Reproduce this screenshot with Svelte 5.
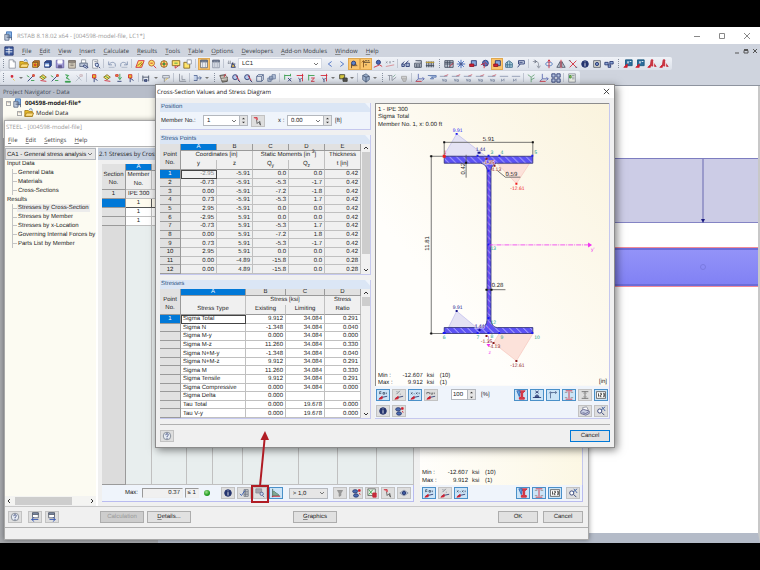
<script lang="ts">
	type Shape = [d: string, stroke: string, fill?: string];

	const navy = '#24346e';
	const red = '#d02030';
	const green = '#2f9a45';
	const grey = '#8b929e';
	const gold = '#e8bc28';
	const none = 'none';

	const diagramArrow: Shape = ['M2 9.5L11 7.5', navy];
	const redBase: Shape = ['M1 11L5 7.5V10.5Z', red, red];

	// every icon is drawn on a 12 x 12 grid
	const icons: Record<string, Shape[]> = {
		logo: [['M1 1H11V11H1Z', navy, '#3c5a9c'], ['M2 4H10M2 7H10M6 2V10', '#fff']],
		model: [['M3 1H9V8H3Z', '#3b6eb4', '#8bb6e6'], ['M1 4H6V11H1ZM3 6H8M3 8H8M9 7V11', '#52617d', '#c9d6e8']],
		new: [['M2.5 1H7.5L10 3.5V11H2.5Z', grey, '#fff'], ['M7.5 1V3.5H10', grey]],
		open: [['M1 10V3H5L6 4H10V10Z', '#a67c18', gold], ['M1 10L3 6H11.5L10 10Z', '#a67c18', '#ffe082'], ['M6 2C8 0 10 1 10 3', '#3970b0']],
		cubeGold: [['M4 2H10V8L8 10V4H2Z', '#7a4a22', '#c4822e'], ['M2 4H8V10H2Z', '#7a4a22', gold], ['M4 6H6V8H4Z', red, gold]],
		cubeBlue: [['M4 2H10V8L8 10V4H2Z', navy, '#3158a8'], ['M2 4H8V10H2Z', navy, '#759bd8'], ['M3 7H7V8H3Z', '#fff', '#fff']],
		save: [['M1.5 1.5H10.5V10.5H1.5Z', '#6a62a8', '#a59fd8'], ['M3.5 1.5H8.5V5H3.5Z', '#fff', '#fff'], ['M4 8H8V10.5H4Z', '#5d5588', '#5d5588']],
		book: [['M2 2H10V11H2Z', '#77706a', '#d9d2bf'], ['M2 2H10V4H2ZM4 6H8M4 8H8', '#77706a', '#9a9284']],
		print: [['M3 1H8V5H3Z', grey, '#fff'], ['M1 5H10V9H1Z', '#5d6a84', '#bac4d6'], ['M6 7L11 10L9 11L5 9Z', navy, '#dde7f6']],
		preview: [['M2 1H8V11H2Z', grey, '#fff'], ['M4 3H7M4 5H7', grey], ['M9 7A2 2 0 1 1 5 7A2 2 0 1 1 9 7M9 9L11 11', navy, '#cfe2f8']],
		undo: [['M2 3V7H6M2.5 7C4 3 10 3 10 7V9', '#7e8faf'], ['M2 10H9', '#a8b2c4']],
		redo: [['M10 3V7H6M9.5 7C8 3 2 3 2 7V9', '#7e8faf'], ['M3 10H10', '#a8b2c4']],
		select: [['M4 2H11L8 10H1Z', red, '#ffe46a'], ['M3 8L8 4M6 9L9 5', '#856000']],
		zoomGold: [['M9 5A3.5 3.5 0 1 1 2 5A3.5 3.5 0 1 1 9 5', '#b4582a', '#ffe46a'], ['M4 5H7M8 8L11 11', red]],
		target: [['M10 6A4 4 0 1 1 2 6A4 4 0 1 1 10 6', '#80631a', '#ffe46a'], ['M6 2V10M2 6H10', red], ['M5 5H7V7H5Z', green, green]],
		screen: [['M1.5 2H10.5V8H1.5Z', '#80631a', '#ffe46a'], ['M5 8V11L9 8', red], ['M4 5H8', green]],
		folder: [['M1 4H8V11H1Z', '#80631a', '#ffe46a'], ['M5 1H10V6H5Z', grey, '#fff']],
		tableOn: [['M2 1.5H10V10.5H2Z', '#5a6375', '#fff'], ['M2 1.5H10V3.5H2Z', '#5a6375', '#7b8aa6'], ['M4.5 3V10.5M7.5 3V10.5', '#8b94a6']],
		tableOff: [['M2 1.5H10V10.5H2Z', '#8b94a6', '#d8dde6'], ['M2 1.5H10V3.5H2Z', '#5a6375', '#7b8aa6'], ['M4.5 3V10.5M7.5 3V10.5', '#a8b0be']],
		loads: [['M2 2V6M4 2V6M1 4.5L2 6L3 4.5', grey], ['M5 6H10M7 4L5 10H10L8 6', navy, '#e2bc5a']],
		prev: [['M8 3L4 6L8 9', '#3a64c0']],
		next: [['M4 3L8 6L4 9', '#3a64c0']],
		support: [['M8 5A2.5 2.5 0 1 1 3 5A2.5 2.5 0 1 1 8 5', navy, '#5f86cc'], ['M3 6V11M3 8H9M7 6L10 8', '#5b4630']],
		values: [['M3 2V10M1 4L3 2L5 4', '#80501c'], ['M3 4H11M5 2H7M8 2H10M5 7H7', '#4f4030']],
		result: [['M9 4A2.5 2.5 0 1 1 4 4A2.5 2.5 0 1 1 9 4', navy, '#4665b5'], ['M1 10L8 7L11 9', red]],
		xxx: [['M1 3L3 5M3 3L1 5M5 3L7 5M7 3L5 5M9 3H11', grey], ['M1 9L11 7', '#d7848c']],
		glasses: [['M1 6L4 3M5 6L9 2', navy], ['M1 6H4V9H1ZM6 5H10V9H6Z', navy, '#a6b6d4']],
		building: [['M2 5H10V10H2ZM3 2H10V5', '#3c4659', '#c6ced9'], ['M4 6V10M6 6V10M8 6V10', '#3c4659']],
		fence: [['M1 4H11M1 8H11M2 3V10M4 3V10M6 3V10M8 3V10M10 3V10', '#394253'], ['M1 4H11', gold]],
		gridTable: [['M1 2H11V10H1Z', '#3c4659', '#c8d0dc'], ['M1 4H11M1 6H11M4 2V10M7 2V10', '#3c4659'], ['M7 9L11 5', red]],
		snow: [['M6 1V11M1 6H11M2.5 2.5L9.5 9.5M9.5 2.5L2.5 9.5', '#315fbe'], ['M5 5H7V7H5Z', navy, '#fff']],
		block: [['M4 2H10V8H4Z', navy, '#86a8dc'], ['M2 6H7V9H2Z', '#8b1525', red]],
		ball: [['M10 5A3.5 3.5 0 1 1 3 5A3.5 3.5 0 1 1 10 5', navy, '#567ec8'], ['M1 7L5 5V11M5 3L9 7', red]],
		mesh: [['M2 10V5L6 2L10 5V10Z', '#386685', '#b3d7e5'], ['M2 7H10M4 3V10M7 3V10', '#386685']],
		flag: [['M3 2H10V6H3Z', navy, '#cfd9ea'], ['M5 6L2 10M4 4H8', navy]],
		curve: [['M1 3H5C8 3 8 6 8 10M6 8L8 11L10 8', grey], ['M3 1L5 3L3 5', '#3c4659']],
		rotate: [['M2 6C2 3 10 3 10 6S2 9 2 6', '#4c74b8'], ['M6 1V11M4.5 3L6 1L7.5 3', red]],
		mirror: [['M1 10L5 3V10ZM11 10L7 3V10Z', '#4c5668', '#c4ccd8'], ['M6 1V11', red]],
		cross: [['M2 2L10 10M10 2L2 10', red], ['M1 2H3M9 10H11', '#4c5668']],
		info: [['M10 6A4 4 0 1 1 2 6A4 4 0 1 1 10 6', navy, navy], ['M6 3V4M6 5V9', '#fff']],
		camera: [['M2 2H10V10H2Z', '#545c68', '#dcdcd4'], ['M8 6A2 2 0 1 1 4 6A2 2 0 1 1 8 6', navy, '#6d89be']],
		gears: [['M5 4H1V7H5ZM11 3H7V6H11ZM8 7H5V10H8Z', navy, '#8ba6d6']],
		docBlue: [['M3 1H11V8H3Z', '#15557c', '#2c6c9c'], ['M5 3L7 5M7 3L5 5M8 3H10', '#fff'], ['M1 10L5 6V10Z', red, red]],
		pdf: [['M5 1H7L8 5L11 9L4 8Z', '#c03040', '#c93744'], ['M8 2V10', '#fff'], ['M1 10L4 7V10Z', red, red]],
		node: [['M5 3H7V5H5Z', red, red], ['M7 7L9 9', gold]],
		member: [['M2 10L9 3', navy], ['M1 3L4 5M6 9H10', green], ['M8 2H10V4H8Z', red, gold]],
		surface: [['M2 5L6 2L10 5L6 8Z', '#7d651a', '#ffe46a'], ['M3 9L10 10', red], ['M4 4L8 6', green]],
		tree: [['M4 2L8 3L5 6L9 8', green, '#7cc488'], ['M4 10H10V11H4Z', green, green]],
		faded: [['M2 10L9 3M3 3L9 9', '#b3bac6'], ['M7 2H10V4H7Z', '#ccb2b8']],
		pin: [['M5 6V11M5 6L9 9', navy], ['M3 2H7V6H3Z', red, gold]],
		force: [['M7 1V7M5 5L7 8L9 5', green], ['M2 2H5V4H2Z', red, gold], ['M4 10H9', navy]],
		dims: [['M1 3V10M1 5H8M8 3V10', '#404b60'], ['M3 8H6V10H3Z', navy, '#6c7890']],
		frame: [['M2 3H10V6H2ZM4 6V11', grey, '#dce1e8'], ['M5 9L8 6', gold]],
		axis: [['M3 1V10H11M6 3V8H10', grey]],
		rigid: [['M1 3H5V9H1M5 6H10M8 4L10 6L8 8', '#536894', '#c6d4ec']],
		wall: [['M1 3L7 2L10 5V10L4 11Z', '#4f4b44', '#a09d94'], ['M2 5L9 4M3 8L10 7', '#e8e4d8'], ['M8 1L6 5', red]],
		zoom: [['M8 5A3 3 0 1 1 2 5A3 3 0 1 1 8 5M8 8L11 11', navy, '#b8cef0'], ['M6 3L10 9', red]],
		cube: [['M2 4H8V10H2ZM4 2H10V8L8 10M8 4L10 2M2 4L4 2', '#50648c']],
		cubes: [['M1 6H5V10H1ZM6 2H10V7H6ZM3 4H7V8H3Z', '#6a7c9e', '#b8c6dc']],
		viewX: [['M2 2V8M2 3H9M9 1V4', green], ['M6 6L10 10M10 6L6 10', navy]],
		viewY: [['M2 3H10M9 1V10', red], ['M4 6L6 8L8 6M6 8V11', navy]],
		viewZ: [['M2 2V9M2 3H9', green], ['M5 6H9L5 10H9', red]],
		film: [['M2 2H8V7H2Z', '#3c3c34', '#d4c640'], ['M6 6H11V10H6Z', '#3c3c34', '#555']],
		solid: [['M2 3L6 1L10 4V8L6 11L2 8Z', '#5a6c88', '#9cb0cc'], ['M2 3L6 5L10 4M6 5V11', '#42516c']],
		mView: [['M1 3H6M3 3V9M6 3V9M6 9L11 5', grey], ['M7 5L10 2', '#83b09a']],
		stamp: [['M3 4H9V7H3ZM4 7L5 10H8L9 7', '#a8a8a8', '#d0d0d0']],
		local: [['M4 1V7L1 10M4 7H11M9 5L11 7L9 9', '#5868b0'], ['M1 10H8', red]],
		moment: [['M1 3H11V5H6L8 7H4L6 5', '#5c77ac', '#a6bbe2']],
		forceV: [['M6 4L11 2', '#cb5c69'], ['M1 4H10', '#8c97b0'], ['M4 7L5 10L6 7M7 8H9V10H7Z', '#8c97b0']],
		forceN: [['M1 4H11M3 7V10L6 7V10', '#8c97b0']],
		plant: [['M5 11V5L1 2M5 5L9 2M5 8L9 6', '#65a174']],
		windows: [['M1 1H5V5H1ZM7 1H11V5H7ZM1 7H5V11H1ZM7 7H11V11H7Z', navy, '#b8c6e2']],
		panel: [['M2 1H10V11H2Z', grey, '#eef0e8'], ['M6 3H9M6 5H9M6 7H9', grey], ['M3 3H5V6H3Z', green, '#c9a44a']],
		help: [['M10.5 6A4.5 4.5 0 1 1 1.5 6A4.5 4.5 0 1 1 10.5 6', '#77808c', '#e8edf4'], ['M4.5 5C4.5 2.5 8 3 7.5 5C7 6 6 6 6 7.5M6 8.5V9.5', navy]],
		pick: [['M4 2L5 9L7 7L9 11', '#444', '#fff'], ['M1 2H5V5', red, '#e88a90'], ['M8 6L9 11', '#555']],
		diaBlue: [['M2 2H4M2 2V5M2 4H4M6 3H8V5H6ZM10 3V5', '#44546e'], diagramArrow, redBase],
		diaPct: [['M3 5L7 1M3 2H4M7 5H8', '#6f7682'], diagramArrow, redBase],
		diaXx: [['M1 3L3 5M3 3L1 5M5 4V5M7 3L9 5M9 3L7 5M11 3V5', '#44546e'], diagramArrow, redBase],
		diaMax: [['M1 5V3H4V5M6 3V5H8V3M10 3V5', '#666'], diagramArrow, redBase],
		stressI: [['M3 1H11L9 3H8V9H10V11H4V9H6V3H3Z', red, '#d84450'], ['M1 1H5L4 8Z', '#2c68b8', '#6ba3dc']],
		pointNo: [['M4 1L8 4M8 1L4 4', navy], ['M1 9H11M6 5V9M4 7H8V9H4Z', navy, '#7391c4']],
		local2: [['M3 10V3H10M1.5 4L3 2L4.5 4M8.5 1.5L10.5 3L8.5 4.5', '#506890']],
		dimI: [['M2 1H10M2 11H10M6 2V10', red], ['M1 3H4M8 3H11M1 9H4M8 9H11', '#999']],
		dimGrey: [['M2 2H10M2 10H10M6 2V10', '#686868'], ['M4 4H8M4 8H8', '#a0a0a0']],
		digits: [['M0.5 2H11.5V10H0.5Z', '#555', '#fff'], ['M3 4V8M5 4H6.5V6H5V8H6.5M8.5 4H10V8H8.5M8.5 6H10', '#333']],
		eyes: [['M8 4A3 2 0 1 1 2 4A3 2 0 1 1 8 4M9 9A3 2 0 1 1 3 9A3 2 0 1 1 9 9', navy, '#4a6cb0'], ['M9 2H11V4H9ZM10 6L11 8', red, red]],
		printer: [['M3 2L8 1L10 5L4 6Z', grey, '#fff'], ['M1 6L4 4L11 6V9L7 11L1 9Z', '#5d5f88', '#c9cfe4'], ['M3 8L7 9L10 7', '#5d5f88']],
		zoomAll: [['M7 6A2.5 2.5 0 1 1 2 6A2.5 2.5 0 1 1 7 6M7 8L10 11', navy, '#fff'], ['M6 5L11 1M7 1L11 6', '#32589d']],
		sheetBack: [['M3 1H10V7H3Z', '#555d6c', '#fff'], ['M3 1H10V3H3Z', '#555d6c', '#8494b0'], ['M10 9H2M5 6L2 9L5 11.5', '#2c4fae']],
		sheetNext: [['M2 1H9V7H2Z', '#555d6c', '#fff'], ['M2 1H9V3H2Z', '#555d6c', '#8494b0'], ['M3 9H10M7 6L10 9L7 11.5', '#2c4fae']],
		tableCheck: [['M6 2H11V10H6ZM6 4H11M6 6H11M6 8H11M8 2V10', '#6f7682', '#e7e7e7'], ['M1 7L3 9L7 3', '#2c56ae']],
		section: [['M1 1H8V6H1Z', '#8f8f98', '#a5a5ae'], ['M10 7A2 2 0 1 1 6 7A2 2 0 1 1 10 7M9 9L11 11', '#4f6290', '#cbd7ee']],
		bars: [['M2 1V11', '#3f5e52'], ['M2 4H4L6 6L8 7L10 9H2Z', '#5f8672', '#7fa795'], ['M1 10H11', red]],
		filter: [['M3 3H9L7 6V9L5 10V6Z', '#8b8b8b', '#9a9a9a']],
		excel: [['M1 1H10V9H1Z', '#666', '#e8f2e6'], ['M2 2L7 8M7 2L2 8', green], ['M7 6H11V11H7Z', red, '#c03040']],
		eye: [['M1 6L6 2.5L11 6L6 9.5Z', '#8a94a8', '#b9c4d8'], ['M8 6A2 2 0 1 1 4 6A2 2 0 1 1 8 6', navy, '#3c5aa0']]
	};

	const barOne =
		'grip new open cubeGold cubeBlue save book print preview | undo redo | select zoomGold target screen folder | *tableOn tableOff | loads lc prev next *support *values result xxx | glasses building fence grip gridTable snow block ball *block mesh flag | curve rotate mirror cross info camera gears grip docBlue docBlue pdf pdf'.split(' ');
	const barTwo =
		'grip node dd member surface member tree faded | pin surface force pin | dims dd frame | axis | rigid dd grip wall zoom zoom cube cubes | viewX viewY viewZ viewY dd film dd | solid dd grip mView stamp | local moment forceV forceV forceV forceV forceV forceN forceN | plant local windows | panel'.split(' ');

	const menu = ['File', 'Edit', 'View', 'Insert', 'Calculate', 'Results', 'Tools', 'Table', 'Options', 'Developers', 'Add-on Modules', 'Window', 'Help'];
	const steelMenu = ['File', 'Edit', 'Settings', 'Help'];

	const inputData = ['General Data', 'Materials', 'Cross-Sections'];
	const results = ['Stresses by Cross-Section', 'Stresses by Member', 'Stresses by x-Location', 'Governing Internal Forces by', 'Parts List by Member'];

	const stressPoints = [
		['-2.95', '-5.91', '0.0', '0.0', '0.42'],
		['-0.73', '-5.91', '-5.3', '-1.7', '0.42'],
		['0.00', '-5.91', '-7.2', '-1.8', '0.42'],
		['0.73', '-5.91', '-5.3', '1.7', '0.42'],
		['2.95', '-5.91', '0.0', '0.0', '0.42'],
		['-2.95', '5.91', '0.0', '0.0', '0.42'],
		['-0.73', '5.91', '-5.3', '1.7', '0.42'],
		['0.00', '5.91', '-7.2', '1.8', '0.42'],
		['0.73', '5.91', '-5.3', '-1.7', '0.42'],
		['2.95', '5.91', '0.0', '0.0', '0.42'],
		['0.00', '-4.89', '-15.8', '0.0', '0.28'],
		['0.00', '4.89', '-15.8', '0.0', '0.28']
	];

	const stresses = [
		['Sigma Total', '9.912', '34.084', '0.291'],
		['Sigma N', '-1.348', '34.084', '0.040'],
		['Sigma M-y', '0.000', '34.084', '0.000'],
		['Sigma M-z', '11.260', '34.084', '0.330'],
		['Sigma N+M-y', '-1.348', '34.084', '0.040'],
		['Sigma N+M-z', '9.912', '34.084', '0.291'],
		['Sigma M', '11.260', '34.084', '0.330'],
		['Sigma Tensile', '9.912', '34.084', '0.291'],
		['Sigma Compressive', '0.000', '34.084', '0.000'],
		['Sigma Delta', '0.000', '', ''],
		['Tau Total', '0.000', '19.678', '0.000'],
		['Tau V-y', '0.000', '19.678', '0.000']
	];

	const emptyColumns = [1, 2, 3, 4, 5, 6, 7];

	let memberNo = $state('1');
	let xLocation = $state('0.00');
	let percent = $state('100');
	let selectedPoint = $state(0);
	let selectedStress = $state(0);
</script>

{#snippet icon(name: string)}
	<svg class="icon" viewBox="0 0 12 12" aria-hidden="true">
		{#each icons[name] as [d, stroke, fill]}
			<path {d} {stroke} fill={fill ?? none} />
		{/each}
	</svg>
{/snippet}

{#snippet tool(name: string, on = false)}
	<button type="button" class="tool" class:on aria-label={name}>{@render icon(name)}</button>
{/snippet}

{#snippet chevron()}
	<svg class="chevron" viewBox="0 0 6 6" aria-hidden="true"><path d="M1 2L3 4L5 2" /></svg>
{/snippet}

{#snippet spinner()}
	<span class="spinner">
		<button type="button" aria-label="Increase"><svg viewBox="0 0 6 4"><path d="M1 3L3 1L5 3Z" /></svg></button>
		<button type="button" aria-label="Decrease"><svg viewBox="0 0 6 4"><path d="M1 1L3 3L5 1Z" /></svg></button>
	</span>
{/snippet}

{#snippet scrollbar()}
	<div class="scrollbar">
		<svg viewBox="0 0 8 8"><path d="M2 5L4 3L6 5" /></svg>
		<i></i>
		<svg viewBox="0 0 8 8"><path d="M2 3L4 5L6 3" /></svg>
	</div>
{/snippet}

{#snippet toolbar(items: string[])}
	<div class="toolbar">
		{#each items as item}
			{#if item === 'grip'}
				<span class="grip"></span>
			{:else if item === '|'}
				<span class="sep"></span>
			{:else if item === 'dd'}
				<button type="button" class="more" aria-label="More"></button>
			{:else if item === 'lc'}
				<label class="combo load-case">
					<select aria-label="Load case"><option>LC1</option></select>
					{@render chevron()}
				</label>
			{:else}
				<button type="button" class="bar-button" class:active={item[0] === '*'} aria-label={item.replace('*', '')}>
					{@render icon(item.replace('*', ''))}
				</button>
			{/if}
		{/each}
	</div>
{/snippet}

<main class="desktop">
	<section class="app">
		<header class="title-bar">
			{@render icon('model')}
			<span>RSTAB 8.18.02 x64 - [004598-model-file, LC1*]</span>
			<div class="window-buttons">
				<button type="button" aria-label="Minimize"><svg viewBox="0 0 8 8"><path d="M1 4.5H7" /></svg></button>
				<button type="button" aria-label="Maximize"><svg viewBox="0 0 8 8"><path d="M1.5 1.5H6.5V6.5H1.5Z" /></svg></button>
				<button type="button" aria-label="Close"><svg viewBox="0 0 8 8"><path d="M1 1L7 7M7 1L1 7" /></svg></button>
			</div>
		</header>
		<nav class="menu-bar">
			{@render icon('logo')}
			{#each menu as item}
				<button type="button"><u>{item[0]}</u>{item.slice(1)}</button>
			{/each}
			<div class="child-buttons">
				<button type="button" aria-label="Minimize document"><svg viewBox="0 0 6 6"><path d="M1 5H5" /></svg></button>
				<button type="button" aria-label="Restore document"><svg viewBox="0 0 6 6"><path d="M1 1.5H5M1 2.5H5V5H1Z" /></svg></button>
				<button type="button" aria-label="Close document"><svg viewBox="0 0 6 6"><path d="M1 1L5 5M5 1L1 5" /></svg></button>
			</div>
		</nav>
		{@render toolbar(barOne)}
		{@render toolbar(barTwo)}
		<div class="workspace">
			<aside class="navigator">
				<h2>Project Navigator - Data</h2>
				<ul>
					<li class="root"><span class="twist">−</span>{@render icon('model')}<b>004598-model-file*</b></li>
					<li class="branch"><span class="twist">−</span>{@render icon('open')}Model Data</li>
				</ul>
			</aside>
			<div class="canvas">
				<div class="load">
					<svg viewBox="0 0 6 64"><path d="M3 0V62" /><path class="head" d="M1 60H5L3 64Z" /></svg>
				</div>
				<div class="beam"><i></i></div>
			</div>
		</div>
	</section>

	<section class="steel">
		<header>STEEL - [004598-model-file]</header>
		<nav>
			{#each steelMenu as item}
				<button type="button"><u>{item[0]}</u>{item.slice(1)}</button>
			{/each}
		</nav>
		<div class="steel-body">
			<div class="cases">
				<label class="combo flat">
					<select aria-label="Case"><option>CA1 - General stress analysis</option></select>
					{@render chevron()}
				</label>
				<div class="case-tree">
					<ul>
						<li>Input Data</li>
						{#each inputData as item}
							<li class="leaf"><span>{item}</span></li>
						{/each}
						<li>Results</li>
						{#each results as item, i}
							<li class="leaf" class:current={i === 0}><span>{item}</span></li>
						{/each}
					</ul>
				</div>
				<div class="h-scroll">
					<svg viewBox="0 0 8 8"><path d="M5 2L3 4L5 6" /></svg>
					<i></i>
					<svg viewBox="0 0 8 8"><path d="M3 2L5 4L3 6" /></svg>
				</div>
			</div>
			<div class="results">
				<h2>2.1 Stresses by Cross-Section</h2>
				<div class="split">
					<div class="pane">
						<table class="sections">
							<colgroup>
								<col class="w24" /><col class="w26" /><col class="w35" /><col class="w26" /><col class="w30" />
								<col class="w56" /><col class="w39" /><col class="w39" /><col />
							</colgroup>
							<thead>
								<tr>
									<th rowspan="2">Section<br />No.</th>
									<th class="letter picked">A</th>
									{#each emptyColumns as _}<th class="letter"></th>{/each}
								</tr>
								<tr class="names">
									<th>Member<br />No.</th>
									{#each emptyColumns as _}<th></th>{/each}
								</tr>
							</thead>
							<tbody>
								<tr class="group"><th>1</th><td colspan="8">IPE 300</td></tr>
								<tr class="picked"><th></th><td>1</td>{#each emptyColumns as _}<td></td>{/each}</tr>
								<tr><th></th><td>1</td>{#each emptyColumns as _}<td></td>{/each}</tr>
								<tr><th></th><td>1</td>{#each emptyColumns as _}<td></td>{/each}</tr>
								<tr class="rest"><th></th><td></td>{#each emptyColumns as _}<td></td>{/each}</tr>
							</tbody>
						</table>
						<div class="strip">
							<label class="max">Max: <input value="0.37" readonly /></label>
							<input class="limit" value="≤ 1" aria-label="Limit" readonly />
							<span class="lamp"></span>
							{@render tool('info')}
							{@render tool('tableCheck')}
							{@render tool('section')}
							{@render tool('bars', true)}
							<label class="combo flat ratio">
								<select aria-label="Ratio filter"><option>&gt; 1,0</option></select>
								{@render chevron()}
							</label>
							{@render tool('filter')}
							{@render tool('eyes')}
							{@render tool('excel')}
							{@render tool('pick')}
							{@render tool('eye')}
						</div>
					</div>
					<div class="pane">
						<div class="preview">
							<dl class="extremes">
								<dt>Min :</dt><dd>-12.607</dd><dd>ksi</dd><dd>(10)</dd>
								<dt>Max :</dt><dd>9.912</dd><dd>ksi</dd><dd>(1)</dd>
							</dl>
						</div>
						<div class="strip">
							{@render tool('diaBlue', true)}
							{@render tool('diaPct')}
							{@render tool('diaXx', true)}
							<span class="push"></span>
							{@render tool('stressI', true)}
							{@render tool('dimI', true)}
							{@render tool('digits', true)}
							<span class="space"></span>
							{@render tool('zoomAll')}
						</div>
					</div>
				</div>
			</div>
		</div>
		<footer>
			{@render tool('help')}
			<span class="space"></span>
			{@render tool('sheetBack')}
			{@render tool('sheetNext')}
			<button type="button" class="push-button calc" disabled>Calculation</button>
			<button type="button" class="push-button"><u>D</u>etails...</button>
			<button type="button" class="push-button graphics"><u>G</u>raphics</button>
			<span class="push"></span>
			<button type="button" class="push-button">OK</button>
			<button type="button" class="push-button">Cancel</button>
		</footer>
		<div class="status"></div>
	</section>

	<section class="dialog" role="dialog" aria-labelledby="dialog-title">
		<header>
			<span id="dialog-title">Cross-Section Values and Stress Diagram</span>
			<button type="button" aria-label="Close"><svg viewBox="0 0 8 8"><path d="M1 1L7 7M7 1L1 7" /></svg></button>
		</header>
		<div class="dialog-body">
			<div class="left">
				<fieldset class="panel">
					<h3>Position</h3>
					<div class="position">
						<label class="member-label" for="member-no">Member No.:</label>
						<span class="combo">
							<select id="member-no" bind:value={memberNo}><option>1</option></select>
							{@render chevron()}
						</span>
						{@render spinner()}
						{@render tool('pick')}
						<label class="x-label" for="x-location">x :</label>
						<span class="combo">
							<select id="x-location" bind:value={xLocation}><option>0.00</option></select>
							{@render chevron()}
						</span>
						{@render spinner()}
						<span class="unit">[ft]</span>
					</div>
				</fieldset>

				<div class="panel">
					<h3>Stress Points</h3>
					<div class="table-box">
						<table class="points">
							<colgroup><col class="w21" /><col /><col /><col /><col /><col /></colgroup>
							<thead>
								<tr>
									<th rowspan="3">Point<br />No.</th>
									{#each 'ABCDE' as letter}
										<th class="letter" class:picked={letter === 'A'}>{letter}</th>
									{/each}
								</tr>
								<tr class="names">
									<th colspan="2">Coordinates [in]</th>
									<th colspan="2">Static Moments [in <sup>3</sup>]</th>
									<th>Thickness</th>
								</tr>
								<tr class="names last">
									<th>y</th><th>z</th><th>Q<sub>y</sub></th><th>Q<sub>z</sub></th><th>t [in]</th>
								</tr>
							</thead>
							<tbody>
								{#each stressPoints as row, i}
									<tr class:picked={i === selectedPoint} onclick={() => (selectedPoint = i)}>
										<th>{i + 1}</th>
										{#each row as cell}<td>{cell}</td>{/each}
									</tr>
								{/each}
							</tbody>
						</table>
						{@render scrollbar()}
					</div>
				</div>

				<div class="panel short">
					<h3>Stresses</h3>
					<div class="table-box">
						<table class="stresses">
							<colgroup><col class="w21" /><col class="w65" /><col class="w40" /><col class="w39" /><col /></colgroup>
							<thead>
								<tr>
									<th rowspan="3">Point<br />No.</th>
									{#each 'ABCD' as letter}
										<th class="letter" class:picked={letter === 'A'}>{letter}</th>
									{/each}
								</tr>
								<tr class="names">
									<th></th>
									<th colspan="2">Stress [ksi]</th>
									<th>Stress</th>
								</tr>
								<tr class="names last">
									<th>Stress Type</th><th>Existing</th><th>Limiting</th><th>Ratio</th>
								</tr>
							</thead>
							<tbody>
								{#each stresses as row, i}
									<tr class:picked={i === selectedStress} onclick={() => (selectedStress = i)}>
										<th>{i === 0 ? '1' : ''}</th>
										{#each row as cell}<td>{cell}</td>{/each}
									</tr>
								{/each}
							</tbody>
						</table>
						{@render scrollbar()}
					</div>
				</div>
			</div>

			<div class="right">
				<svg class="diagram" viewBox="0 0 234 283" preserveAspectRatio="xMidYMid meet">
					<defs>
						<linearGradient id="paper" x1="0" y1="1" x2="1" y2="0">
							<stop offset="0.3" stop-color="#fffefb" />
							<stop offset="1" stop-color="#faf3dd" />
						</linearGradient>
						<pattern id="hatch" width="7" height="7" patternUnits="userSpaceOnUse">
							<rect width="7" height="7" fill="#5c52f4" />
							<path d="M-1 -1L8 8M-1 6L1 8M6 -1L8 1" stroke="#b9b4ff" stroke-width="1" />
						</pattern>
					</defs>
					<rect width="234" height="283" fill="url(#paper)" />
					<text x="2" y="7">1 - IPE 300</text>
					<text x="2" y="14">Sigma Total</text>
					<text x="2" y="22">Member No. 1, x: 0.00 ft</text>

					<!-- stress areas -->
					<path class="tension" d="M68 52L81 30L111 53Z" />
					<path class="compression" d="M122 60H154L141 80Z" />
					<path class="tension" d="M73 224L81 208L104 227Z" />
					<path class="compression" d="M124 230H158L141 258L118 240Z" />

					<!-- profile -->
					<path
						class="profile"
						d="M68.5 52.5H157.5V59.5H121C118 60 115.5 63 115.5 67V216C115.5 221 118 224.5 122 224.5H157.5V230.5H68.5V224.5H105C109 224.5 111.5 221 111.5 216V67C111.5 63 109 60 105 59.5H68.5Z"
					/>

					<!-- dimensions -->
					<path class="dim" d="M68.5 52V38.5H157.5V52M55.5 52.5V230.5M54 52.5H68M54 230.5H68M90.5 51V74M110 186.5H130M122 67L130 73.5H145" />
					<path class="dot" d="M67.500 37.500h2v2h-2zM156.500 37.500h2v2h-2zM54.500 51.500h2v2h-2zM54.500 229.500h2v2h-2zM89.500 58h2v2h-2zM110 185.500h2v2h-2zM115 185.500h2v2h-2z" />
					<text class="mid" x="113" y="37">5.91</text>
					<text class="mid" x="136" y="72">0.59</text>
					<text class="mid" x="122" y="184">0.28</text>
					<text class="mid" transform="translate(53 140) rotate(-90)">11.81</text>
					<text class="mid" transform="translate(89 65) rotate(-90)">0.42</text>

					<!-- axes -->
					<path class="axis" d="M113 141.500H214" />
					<path class="magenta" d="M213 139L217 141.500L213 144ZM111 241H115L113 244Z" />
					<path class="web-axis" d="M113 53V240" />
					<text class="small axis-name" x="216" y="148">y'</text>
					<text class="small axis-name" x="113" y="251">z</text>

					<!-- stress points -->
					<path class="blue" d="M101 51h2v2h-2zM112 51h2v2h-2zM123 51h2v2h-2zM156 51h2v2h-2zM80 29h2v2h-2zM112 66h2v2h-2zM112 140h2v2h-2zM112 214h2v2h-2zM67 229h3v2h-3zM101 229h2v2h-2zM112 229h2v2h-2zM123 229h2v2h-2zM156 229h2v2h-2z" />
					<path class="navy" d="M102 48h3v2h-3zM80 207h2v2h-2zM103 226h2v2h-2z" />
					<path class="maroon" d="M110 54h2v2h-2zM118 61h2v2h-2zM110 232h2v2h-2zM117 239h2v2h-2zM140 257h2v2h-2z" />
					<path class="bright" d="M67 51h3v3h-3zM140 79h2v2h-2z" />
					<g class="small">
						<g class="point-no">
							<text x="115" y="50">3</text>
							<text x="125" y="50">4</text>
							<text x="159" y="50">5</text>
							<text x="115" y="147">13</text>
							<text x="115" y="221">12</text>
							<text x="67" y="236">6</text>
							<text x="101" y="236">7</text>
							<text x="115" y="235">8</text>
							<text x="125" y="236">9</text>
							<text x="159" y="236">10</text>
						</g>
						<text class="bright" x="68" y="50">1</text>
						<text class="mid blue" x="82" y="28">9.91</text>
						<text class="mid navy" x="105" y="47">1.44</text>
						<text class="mid maroon halo" x="113" y="60">-1.35</text>
						<text class="mid maroon" x="120" y="67">-4.13</text>
						<text class="mid bright" x="142" y="86">-12.61</text>
						<text class="mid navy" x="82" y="206">9.91</text>
						<text class="mid navy halo" x="104" y="225">1.44</text>
						<text class="mid maroon" x="111" y="240">-1.35</text>
						<text class="mid maroon" x="119" y="245">-4.13</text>
						<text class="mid maroon" x="142" y="264">-12.61</text>
					</g>

					<text x="2" y="274">Min :</text>
					<text class="end" x="47" y="274">-12.607</text>
					<text x="51" y="274">ksi</text>
					<text x="64" y="274">(10)</text>
					<text x="2" y="281">Max :</text>
					<text class="end" x="47" y="281">9.912</text>
					<text x="51" y="281">ksi</text>
					<text x="64" y="281">(1)</text>
					<text class="end" x="232" y="280">[in]</text>
				</svg>
				<div class="diagram-tools">
					<div class="tool-row">
						{@render tool('diaBlue', true)}
						{@render tool('diaPct')}
						{@render tool('diaXx', true)}
						{@render tool('diaMax')}
						<span class="percent"><input bind:value={percent} aria-label="Scale" />{@render spinner()}</span>
						<span class="unit">[%]</span>
						<span class="push"></span>
						{@render tool('stressI', true)}
						{@render tool('pointNo', true)}
						{@render tool('local2', true)}
						{@render tool('dimI', true)}
						{@render tool('dimGrey')}
						{@render tool('digits', true)}
					</div>
					<div class="tool-row">
						{@render tool('info')}
						{@render tool('eyes')}
						<span class="push"></span>
						{@render tool('printer')}
						{@render tool('zoomAll')}
					</div>
				</div>
			</div>
		</div>
		<footer>
			{@render tool('help')}
			<button type="button" class="push-button default">Cancel</button>
		</footer>
	</section>

	<svg class="callout" viewBox="0 0 22 74" aria-hidden="true">
		<rect x="2" y="56" width="16" height="16" />
		<path class="shaft" d="M10 56L14.500 10" />
		<path class="tip" d="M15 1L19 10H10.500Z" />
	</svg>
</main>

<style>
	:global(body) {
		background: #000;
		margin: 0;
	}

	.desktop {
		--ui: 'Open Sans', 'Noto Sans', sans-serif;
		box-sizing: border-box;
		color: #222;
		display: flex;
		flex-direction: column;
		font-family: 'Liberation Sans', Arial, sans-serif;
		font-size: 6px;
		line-height: 8px;
		min-height: 100vh;
		overflow: hidden;
		padding: 27px 0;
		position: relative;
		text-rendering: geometricPrecision;
	}

	.desktop *,
	.desktop *::before {
		box-sizing: border-box;
	}

	button,
	select,
	input {
		background: none;
		border: 0;
		border-radius: 0;
		color: inherit;
		font: inherit;
		margin: 0;
		min-width: 0;
		outline: 0;
		padding: 0;
		text-rendering: inherit;
	}

	h2,
	h3,
	ul,
	dl,
	dd,
	fieldset {
		border: 0;
		font: inherit;
		list-style: none;
		margin: 0;
		min-width: 0;
		padding: 0;
	}

	u {
		text-underline-offset: 1px;
		text-decoration-thickness: 1px;
		text-decoration-color: #888;
	}

	svg {
		display: block;
		fill: none;
	}

	.icon {
		flex: none;
		height: 10px;
		width: 10px;
	}

	.push {
		flex: 1;
	}

	/* main window */
	.app {
		background: #cfd4de;
		display: flex;
		flex: 1;
		flex-direction: column;
	}

	.title-bar {
		align-items: center;
		background: #fff;
		color: #999;
		display: flex;
		font-family: var(--ui);
		gap: 3px;
		height: 17px;
		padding-left: 4px;
	}

	.window-buttons {
		display: flex;
		gap: 17px;
		margin-left: auto;
		padding-right: 9px;
	}

	.window-buttons svg {
		height: 8px;
		stroke: #888;
		width: 8px;
	}

	.menu-bar {
		align-items: center;
		color: #3a3f48;
		display: flex;
		font-family: var(--ui);
		gap: 8px;
		height: 13px;
		padding-left: 4px;
	}

	.child-buttons {
		display: flex;
		gap: 3px;
		margin-left: auto;
		padding-right: 2px;
	}

	.child-buttons svg {
		height: 6px;
		stroke: #555;
		width: 6px;
	}

	.toolbar {
		align-items: center;
		align-self: flex-start;
		background: linear-gradient(#f0f3f8, #dbe0e9);
		border-radius: 2px;
		display: flex;
		height: 13px;
		margin-bottom: 1px;
		padding-right: 2px;
	}

	.bar-button {
		display: grid;
		height: 12px;
		place-items: center;
		width: 12px;
	}

	.bar-button.active {
		background: #fbc56c;
		box-shadow: inset 0 0 0 1px #e0a850;
	}

	.grip {
		border-left: 1px dotted #8891a0;
		height: 9px;
		margin-left: 3px;
		width: 4px;
	}

	.toolbar .grip:first-child {
		width: 3px;
	}

	.sep {
		border-left: 1px solid #c0c6d2;
		height: 9px;
		margin-left: 1px;
		width: 3px;
	}

	.more {
		border: 2px solid transparent;
		border-bottom: 0;
		border-top-color: #777;
		height: 2px;
		margin: 0 2px 0 1px;
		width: 4px;
	}

	.combo {
		background: #fff;
		border: 1px solid #b4b8be;
		display: grid;
		height: 11px;
		width: 37px;
	}

	.combo select {
		appearance: none;
		grid-area: 1 / 1;
		height: 9px;
		line-height: 8px;
		padding-left: 3px;
		padding-top: 1px;
		width: 100%;
	}

	.combo .chevron {
		align-self: center;
		grid-area: 1 / 1;
		height: 6px;
		justify-self: end;
		margin-right: 2px;
		pointer-events: none;
		stroke: #777;
		width: 6px;
	}

	.combo.flat {
		background: #e6e6e6;
	}

	.combo.load-case {
		border-color: #d5dae4;
		margin-right: 2px;
		width: 84px;
	}

	.workspace {
		border-top: 1px solid #8e949f;
		display: flex;
		flex: 1;
	}

	.navigator {
		background: #a7a9ad;
		width: 158px;
	}

	.navigator h2 {
		background: #b7bdc9;
		color: #444b58;
		font-family: var(--ui);
		line-height: 12px;
		padding-left: 3px;
	}

	.navigator ul {
		background: #fcfbf2;
		font-family: var(--ui);
		height: 40px;
		margin-left: 3px;
	}

	.navigator li {
		align-items: center;
		display: flex;
		gap: 2px;
		height: 10px;
		padding-left: 3px;
	}

	.navigator .branch {
		padding-left: 14px;
	}

	.twist {
		border: 1px solid #aaa;
		color: #555;
		height: 5px;
		line-height: 3px;
		text-align: center;
		width: 5px;
	}

	.canvas {
		background: #fff;
		border-bottom: 10px solid #b4bbc8;
		border-right: 2px solid #c8c8c8;
		flex: 1;
		padding-top: 72px;
	}

	.load {
		background: #cccce6;
		border-bottom: 1px solid #8484c4;
		border-top: 1px solid #7d7dc0;
		display: flex;
		height: 65px;
		justify-content: flex-end;
		padding-right: 52px;
	}

	.load svg {
		height: 64px;
		stroke: #6868b0;
		width: 6px;
	}

	.load .head {
		fill: #1a1a80;
		stroke: none;
	}

	.beam {
		align-items: center;
		background: linear-gradient(#9494f8, #8080f4);
		border: solid #f08a98;
		border-width: 1px 0;
		box-shadow: inset 0 2px #6c6cd8, inset 0 -2px #6c6cd8;
		display: flex;
		height: 40px;
		justify-content: flex-end;
		margin-top: 24px;
		padding-right: 52px;
	}

	.beam i {
		border: 1px solid #7a7ae0;
		border-radius: 50%;
		height: 6px;
		width: 6px;
	}

	/* STEEL module window */
	.steel {
		background: #f0f0f0;
		border: 1px solid #a8a8a8;
		bottom: 30px;
		box-shadow: 0 0 5px rgb(0 0 0 / 40%);
		display: flex;
		flex-direction: column;
		left: 4px;
		position: absolute;
		right: 171px;
		top: 120px;
	}

	.steel > header {
		background: #fff;
		color: #999;
		font-family: var(--ui);
		line-height: 13px;
		padding-left: 1px;
	}

	.steel > nav {
		background: #fff;
		border-bottom: 1px solid #b4b4b4;
		color: #444;
		display: flex;
		font-family: var(--ui);
		gap: 8px;
		height: 13px;
		padding-left: 3px;
	}

	.steel-body {
		border-bottom: 1px solid #c8c8c8;
		display: grid;
		flex: 1;
		grid-template-columns: 91px minmax(0, 1fr);
		min-height: 0;
	}

	.cases {
		display: flex;
		flex-direction: column;
		padding-top: 1px;
	}

	.cases .combo {
		height: 12px;
		width: 100%;
	}

	.cases .combo select {
		height: 10px;
		padding-left: 1px;
	}

	.case-tree {
		background: #fcfbf2;
		flex: 1;
	}

	.case-tree ul {
		display: grid;
		grid-auto-rows: 1fr;
		height: 88px;
	}

	.case-tree li {
		align-items: center;
		display: flex;
		padding-left: 2px;
		white-space: nowrap;
	}

	.case-tree .leaf {
		border-left: 1px solid #c4c4c4;
		margin-left: 7px;
		padding-left: 0;
	}

	.case-tree .leaf::before {
		border-top: 1px solid #c4c4c4;
		content: '';
		width: 4px;
	}

	.case-tree .leaf span {
		padding: 0 1px;
	}

	.case-tree .current span {
		background: #ececec;
	}

	.h-scroll {
		align-items: center;
		background: #f4f4f2;
		display: flex;
		height: 9px;
		margin-bottom: 1px;
	}

	.h-scroll svg,
	.scrollbar svg {
		flex: none;
		height: 8px;
		stroke: #333;
		width: 8px;
	}

	.h-scroll i {
		background: #cdcdcd;
		height: 8px;
		margin-left: 2px;
		margin-right: auto;
		width: 57px;
	}

	.results {
		border-left: 2px solid #fff;
		display: flex;
		flex-direction: column;
		min-height: 0;
		padding-top: 1px;
	}

	.results h2 {
		background: #c4cfdf;
		font-family: var(--ui);
		line-height: 12px;
		padding-left: 1px;
	}

	.split {
		display: grid;
		flex: 1;
		gap: 6px;
		grid-template-columns: 312px minmax(0, 1fr);
		min-height: 0;
		padding: 4px 5px 4px 4px;
	}

	.pane {
		display: flex;
		flex-direction: column;
		min-height: 0;
	}

	.strip {
		align-items: center;
		background: #eff4fb;
		border: solid #b9bbf0;
		border-width: 0 1px 1px 0;
		display: flex;
		gap: 2px;
		height: 17px;
		padding-left: 2px;
		padding-right: 2px;
	}

	.strip input {
		background: #f0f0f0;
		border: 1px solid #999;
		border-color: #999 #eee #eee #999;
		height: 10px;
		padding-right: 2px;
		text-align: right;
		width: 41px;
	}

	.strip .limit {
		width: 14px;
	}

	.max {
		align-items: center;
		display: flex;
		gap: 4px;
		margin-left: 21px;
	}

	.lamp {
		background: radial-gradient(circle at 40% 35%, #9be08c, #1f9a1f 60%);
		border-radius: 50%;
		flex: none;
		height: 6px;
		margin: 0 9px 0 3px;
		width: 6px;
	}

	.combo.ratio {
		margin: 0 3px 0 4px;
		width: 40px;
	}

	.preview {
		align-items: flex-end;
		background: linear-gradient(to right, #fffefb, #fcf7e4);
		border-right: 1px solid #c5c8ee;
		display: flex;
		flex: 1;
	}

	.extremes {
		display: grid;
		gap: 0 4px;
		grid-template-columns: 18px 24px 9px auto;
		padding-left: 2px;
	}

	.extremes dd:nth-of-type(3n + 1) {
		text-align: right;
	}

	.steel > footer {
		align-items: center;
		border-bottom: 1px solid #b0b0b0;
		display: flex;
		gap: 3px;
		height: 21px;
		padding: 0 5px 0 3px;
	}

	.space {
		width: 0;
	}

	.calc {
		margin-left: 38px;
	}

	.graphics {
		margin-left: 99px;
	}

	.status {
		height: 11px;
	}

	/* shared controls */
	.tool {
		background: #dedede;
		border: 1px solid #c2c2c2;
		display: grid;
		flex: none;
		height: 12px;
		place-items: center;
		width: 14px;
	}

	.tool.on {
		background: #cce4f7;
		border-color: #4a90c8;
	}

	.push-button {
		background: #e1e1e1;
		border: 1px solid #adadad;
		flex: none;
		height: 12px;
		line-height: 10px;
		width: 44px;
	}

	.push + .push-button,
	.push + .push-button + .push-button,
	.push-button.default {
		width: 40px;
	}

	.push + .push-button + .push-button {
		margin-left: 2px;
	}

	.push-button:disabled {
		background: #cdcdcd;
		color: #999;
	}

	.push-button.default {
		border-color: #0078d7;
	}

	.spinner {
		background: #e4e4e4;
		border: 1px solid #b4b8be;
		border-left: 0;
		display: grid;
		height: 11px;
		width: 8px;
	}

	.spinner button {
		display: grid;
		place-items: center;
	}

	.spinner svg {
		fill: #333;
		height: 3px;
		width: 5px;
	}

	/* tables */
	table {
		border-collapse: separate;
		border-spacing: 0;
		table-layout: fixed;
		width: 100%;
	}

	th,
	td {
		border: solid #c0c0c0;
		border-width: 0 1px 1px 0;
		font-weight: 400;
		line-height: 7px;
		padding: 0;
		white-space: nowrap;
	}

	tbody th,
	th[rowspan] {
		background: #e1e1e1;
		border-color: #9a9a9a;
	}

	th.letter {
		background: #e1e1e1;
		border-color: #9a9a9a;
		height: 7px;
		line-height: 6px;
	}

	th.picked,
	tr.picked th {
		background: #0078d7;
		color: #fff;
	}

	td {
		padding-right: 2px;
		text-align: right;
	}

	.w21 { width: 21px; }
	.w24 { width: 24px; }
	.w26 { width: 26px; }
	.w30 { width: 30px; }
	.w35 { width: 35px; }
	.w39 { width: 39px; }
	.w40 { width: 40px; }
	.w56 { width: 56px; }
	.w65 { width: 65px; }

	.sections {
		background: #e8eeee;
		flex: 1;
		height: 320px;
	}

	.sections .names th {
		background: #f0f0f0;
		height: 19px;
		line-height: 9px;
	}

	.sections th[rowspan] {
		line-height: 8px;
		padding-top: 5px;
	}

	.sections tbody tr {
		height: 9px;
	}

	.sections tbody td {
		background: #fff;
		padding: 0;
		text-align: center;
	}

	.sections .group td {
		background: #eee;
		padding-left: 2px;
		text-align: left;
	}

	.sections .picked td {
		background: #fffbee;
		border-color: #555;
	}

	.sections tbody .rest {
		height: auto;
	}

	.sections .rest td {
		background: #e8eeee;
	}

	.sections .rest th {
		background: #dcdcdc;
	}

	/* cross-section dialog */
	.dialog {
		background: #f0f0f0;
		border: 1px solid #8c8c8c;
		box-shadow: 2px 2px 8px rgb(0 0 0 / 50%);
		left: 155px;
		position: absolute;
		right: 145px;
		top: 84px;
	}

	.dialog > header {
		align-items: center;
		background: #fff;
		color: #111;
		display: flex;
		font-family: var(--ui);
		height: 13px;
		justify-content: space-between;
		padding: 0 4px 0 1px;
	}

	.dialog > header svg {
		height: 7px;
		stroke: #333;
		width: 7px;
	}

	.dialog-body {
		border-bottom: 1px solid #b0b0b0;
		display: grid;
		gap: 4px;
		grid-template-columns: 211px minmax(0, 1fr);
		margin: 0 4px;
		padding: 5px 0;
	}

	.left {
		display: flex;
		flex-direction: column;
		gap: 5px;
	}

	.panel {
		background: #eff4fb;
		border: solid #c5c8ee;
		border-width: 0 1px 1px 0;
	}

	.panel h3 {
		background: #dbe6f5;
		clip-path: polygon(0 0, 205px 0, 100% 60%, 100% 100%, 0 100%);
		color: #2a5080;
		line-height: 9px;
		padding-left: 1px;
	}

	.position {
		align-items: center;
		display: flex;
		height: 17px;
		padding-left: 1px;
	}

	.member-label {
		width: 42px;
	}

	.position .tool {
		margin: 0 13px 0 3px;
	}

	.x-label {
		width: 9px;
	}

	.unit {
		padding-left: 3px;
	}

	.table-box {
		display: grid;
		grid-template-columns: 201px 9px;
	}

	.points,
	.stresses {
		background: #f0f0f0;
		height: 130px;
	}

	.stresses {
		height: 129px;
	}

	.dialog tbody th,
	.dialog tbody td {
		line-height: 6px;
		padding-top: 1px;
	}

	.dialog .names th {
		border-bottom: 0;
		height: 9px;
		line-height: 9px;
	}

	.dialog .names.last th {
		border-bottom: 1px solid #9a9a9a;
		height: 10px;
	}

	sup,
	sub {
		font-size: 5px;
		line-height: 0;
	}

	.dialog th[rowspan] {
		line-height: 8px;
		padding-top: 5px;
		vertical-align: middle;
	}

	.stresses td {
		background: #fff;
	}

	.stresses td:nth-child(2) {
		padding-left: 2px;
		text-align: left;
	}

	.dialog .picked td:nth-child(2) {
		border-color: #444;
		box-shadow: inset 1px 1px #444;
	}

	.points .picked td:nth-child(2) {
		color: #888;
	}

	.scrollbar {
		align-items: center;
		background: #f0f0f0;
		display: flex;
		flex-direction: column;
	}

	.scrollbar i {
		background: #cdcdcd;
		height: 102px;
		margin-bottom: auto;
		width: 8px;
	}

	.short .scrollbar i {
		height: 9px;
	}

	.right {
		border: solid #c5c8ee;
		border-width: 0 1px 1px 0;
		display: flex;
		flex-direction: column;
	}

	.diagram {
		border-left: 1px solid #8c8c8c;
		border-top: 1px solid #8c8c8c;
		width: 100%;
	}

	.diagram text {
		fill: #222;
		font-size: 6px;
	}

	.diagram .small text,
	.diagram .small {
		font-size: 5px;
	}

	.diagram .mid {
		text-anchor: middle;
	}

	.diagram .end {
		text-anchor: end;
	}

	.diagram .profile {
		fill: url(#hatch);
		stroke: #2c2c70;
		stroke-width: 0.8;
	}

	.diagram .tension {
		fill: #e4e2f4;
		stroke: #b6b3ea;
		stroke-width: 0.6;
	}

	.diagram .compression {
		fill: #fce2da;
		stroke: #f5c0b8;
		stroke-width: 0.6;
	}

	.diagram .dim {
		stroke: #555;
		stroke-width: 0.8;
	}

	.diagram .dot {
		fill: #111;
	}

	.diagram .axis {
		stroke: #f030f0;
		stroke-dasharray: 5 1 1 1;
		stroke-width: 0.8;
	}

	.diagram .web-axis {
		stroke: #a040e0;
		stroke-dasharray: 3 2;
		stroke-width: 0.5;
	}

	.diagram .magenta,
	.diagram text.axis-name {
		fill: #f030f0;
	}

	.diagram .blue,
	.diagram text.blue {
		fill: #1c1cf0;
	}

	.diagram .navy,
	.diagram text.navy {
		fill: #15158c;
	}

	.diagram .maroon,
	.diagram text.maroon {
		fill: #8c1c1c;
	}

	.diagram .bright,
	.diagram text.bright {
		fill: #f01c1c;
	}

	.diagram .halo {
		paint-order: stroke;
		stroke: #e4d8f0;
		stroke-width: 1px;
	}

	.diagram .point-no text {
		fill: #22a088;
	}

	.diagram-tools {
		background: #eff4fb;
		display: flex;
		flex: 1;
		flex-direction: column;
		gap: 4px;
		padding: 3px 1px 1px;
	}

	.tool-row {
		align-items: center;
		display: flex;
		gap: 2px;
	}

	.percent {
		display: flex;
		margin-left: 11px;
	}

	.percent input {
		background: #fff;
		border: 1px solid #b4b8be;
		height: 11px;
		padding-left: 1px;
		width: 17px;
	}

	.dialog > footer {
		align-items: center;
		display: flex;
		height: 22px;
		justify-content: space-between;
		padding: 0 4px;
	}

	/* red pointer to the section button */
	.callout {
		height: 74px;
		left: 250px;
		pointer-events: none;
		position: absolute;
		top: 430px;
		width: 22px;
	}

	.callout rect,
	.callout .shaft {
		stroke: #b01c24;
		stroke-width: 2px;
	}

	.callout .tip {
		fill: #b01c24;
	}
</style>
